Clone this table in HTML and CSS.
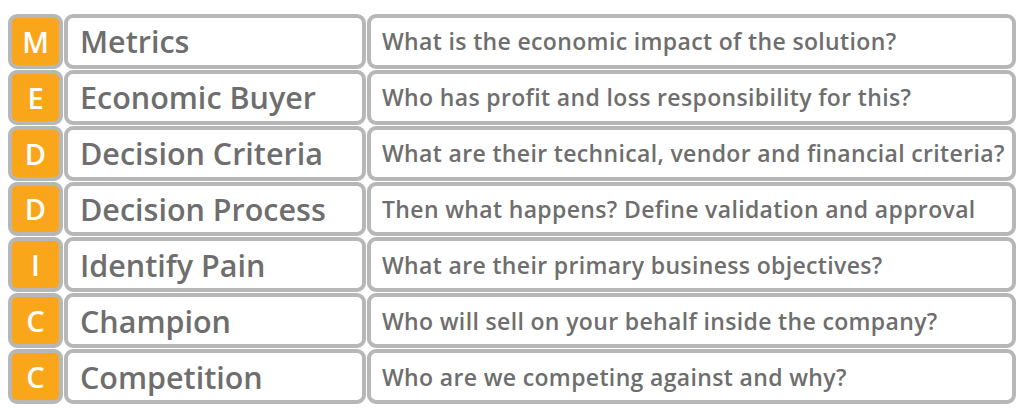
FILE: index.html
```html
<!DOCTYPE html>
<html>
<head>
<meta charset="utf-8">
<link rel="stylesheet" href="styles.css">
</head>
<body>
<div class="meddicc">
  <div class="letter">M</div><div class="label">Metrics</div><div class="question">What is the economic impact of the solution?</div>
  <div class="letter">E</div><div class="label">Economic Buyer</div><div class="question">Who has profit and loss responsibility for this?</div>
  <div class="letter">D</div><div class="label">Decision Criteria</div><div class="question">What are their technical, vendor and financial criteria?</div>
  <div class="letter">D</div><div class="label">Decision Process</div><div class="question">Then what happens? Define validation and approval</div>
  <div class="letter">I</div><div class="label">Identify Pain</div><div class="question">What are their primary business objectives?</div>
  <div class="letter">C</div><div class="label">Champion</div><div class="question">Who will sell on your behalf inside the company?</div>
  <div class="letter">C</div><div class="label">Competition</div><div class="question">Who are we competing against and why?</div>
</div>
</body>
</html>
```
FILE: styles.css
```css
html, body {
  margin: 0;
  padding: 0;
  background: #ffffff;
}
body {
  padding: 14px 8px 0 8px;
  font-family: "Open Sans", "Noto Sans", sans-serif;
}
.meddicc {
  width: 1008px;
  height: 390px;
  display: grid;
  grid-template-columns: 55px 302px 1fr;
  grid-template-rows: repeat(7, 1fr);
  column-gap: 1px;
  row-gap: 1px;
}
.letter, .label, .question {
  box-sizing: border-box;
  border: 4.5px solid #b7b7b7;
  border-radius: 9px;
  display: flex;
  align-items: center;
}
.letter {
  background: #faa61a;
  color: #ffffff;
  justify-content: center;
  font-size: 29px;
  font-weight: 600;
}
.label {
  background: #ffffff;
  color: #6e6e6e;
  padding-left: 12px;
  font-size: 30.5px;
  font-weight: 600;
  letter-spacing: 0;
}
.question {
  background: #ffffff;
  color: #6e6e6e;
  padding-left: 11px;
  font-size: 23px;
  font-weight: 600;
  letter-spacing: 0.35px;
}
```
